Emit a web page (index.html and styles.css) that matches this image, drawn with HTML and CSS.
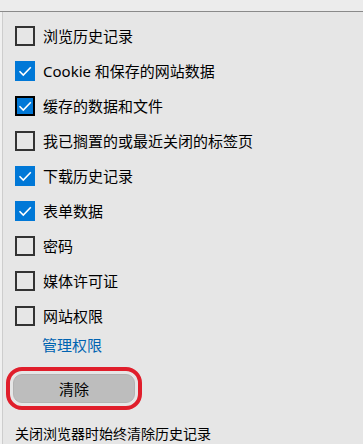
FILE: index.html
```html
<!DOCTYPE html>
<html lang="zh-CN">
<head>
<meta charset="utf-8">
<link rel="stylesheet" href="styles.css">
</head>
<body>
<div class="top"></div>
<div class="panel">
  <ul class="list">
    <li class="row"><span class="box"></span><span class="label">浏览历史记录</span></li>
    <li class="row"><span class="box checked"><svg viewBox="0 0 20 20"><path d="M4.5 10.2 L8.3 14 L15.8 6.3"/></svg></span><span class="label">Cookie 和保存的网站数据</span></li>
    <li class="row"><span class="box checked focus"><svg viewBox="0 0 20 20"><path d="M4.5 10.2 L8.3 14 L15.8 6.3"/></svg></span><span class="label">缓存的数据和文件</span></li>
    <li class="row"><span class="box"></span><span class="label">我已搁置的或最近关闭的标签页</span></li>
    <li class="row"><span class="box checked"><svg viewBox="0 0 20 20"><path d="M4.5 10.2 L8.3 14 L15.8 6.3"/></svg></span><span class="label">下载历史记录</span></li>
    <li class="row"><span class="box checked"><svg viewBox="0 0 20 20"><path d="M4.5 10.2 L8.3 14 L15.8 6.3"/></svg></span><span class="label">表单数据</span></li>
    <li class="row"><span class="box"></span><span class="label">密码</span></li>
    <li class="row"><span class="box"></span><span class="label">媒体许可证</span></li>
    <li class="row"><span class="box"></span><span class="label">网站权限</span></li>
  </ul>
  <a class="link" href="#">管理权限</a>
  <div class="actions"><button class="clear">清除</button></div>
  <p class="note">关闭浏览器时始终清除历史记录</p>
</div>
</body>
</html>
```
FILE: styles.css
```css
html, body {
  margin: 0;
  padding: 0;
}
body {
  width: 363px;
  height: 444px;
  overflow: hidden;
  background: #f0f0f0;
  font-family: "Noto Sans", "Noto Sans CJK SC", sans-serif;
  font-size: 15px;
  color: #000;
}
.top {
  height: 11px;
  background: #ececec;
  border-bottom: 1px solid #8a8a8a;
}
.panel {
  margin-left: 2px;
  border-left: 1px solid #cdcdcd;
  background: #e6e6e6;
  height: 432px;
  padding-left: 12px;
  box-sizing: border-box;
}
.list {
  list-style: none;
  margin: 0;
  padding: 6px 0 0 0;
}
.row {
  height: 35px;
  display: flex;
  align-items: center;
  gap: 8px;
}
.box {
  width: 20px;
  height: 20px;
  box-sizing: border-box;
  border: 2px solid #333;
  display: flex;
  align-items: center;
  justify-content: center;
  flex: none;
}
.box.checked {
  background: #0078d7;
  border-color: #0078d7;
}
.box.focus {
  border-color: #000;
}
.box svg {
  width: 20px;
  height: 20px;
  flex: none;
}
.box.checked svg {
  margin: -2px;
}
.box svg path {
  fill: none;
  stroke: #fff;
  stroke-width: 1.6;
}
.label {
  line-height: 20px;
  white-space: nowrap;
}
.link {
  display: block;
  margin: 2px 0 0 27px;
  line-height: 20px;
  color: #0063b1;
  text-decoration: none;
}
.actions {
  margin-top: 19px;
}
.clear {
  display: block;
  margin-left: -2px;
  width: 122px;
  height: 29px;
  background: #bdbdbd;
  border: 1px solid #b3b3b3;
  border-radius: 9px;
  font: inherit;
  color: #000;
  padding: 0;
  outline: 4px solid #e01e2b;
  outline-offset: 3px;
}
.note {
  margin: 21px 0 0 0;
  font-size: 14px;
  line-height: 20px;
  white-space: nowrap;
}
```
